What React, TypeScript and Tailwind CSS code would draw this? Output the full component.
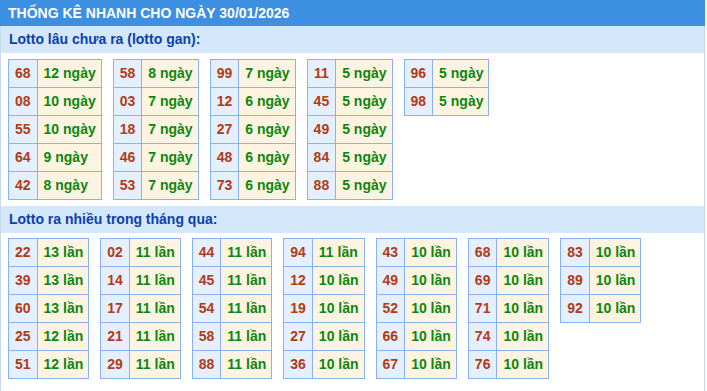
const gan: [string, string][][] = [
  [["68", "12 ngày"], ["08", "10 ngày"], ["55", "10 ngày"], ["64", "9 ngày"], ["42", "8 ngày"]],
  [["58", "8 ngày"], ["03", "7 ngày"], ["18", "7 ngày"], ["46", "7 ngày"], ["53", "7 ngày"]],
  [["99", "7 ngày"], ["12", "6 ngày"], ["27", "6 ngày"], ["48", "6 ngày"], ["73", "6 ngày"]],
  [["11", "5 ngày"], ["45", "5 ngày"], ["49", "5 ngày"], ["84", "5 ngày"], ["88", "5 ngày"]],
  [["96", "5 ngày"], ["98", "5 ngày"]],
];

const nhieu: [string, string][][] = [
  [["22", "13 lần"], ["39", "13 lần"], ["60", "13 lần"], ["25", "12 lần"], ["51", "12 lần"]],
  [["02", "11 lần"], ["14", "11 lần"], ["17", "11 lần"], ["21", "11 lần"], ["29", "11 lần"]],
  [["44", "11 lần"], ["45", "11 lần"], ["54", "11 lần"], ["58", "11 lần"], ["88", "11 lần"]],
  [["94", "11 lần"], ["12", "10 lần"], ["19", "10 lần"], ["27", "10 lần"], ["36", "10 lần"]],
  [["43", "10 lần"], ["49", "10 lần"], ["52", "10 lần"], ["66", "10 lần"], ["67", "10 lần"]],
  [["68", "10 lần"], ["69", "10 lần"], ["71", "10 lần"], ["74", "10 lần"], ["76", "10 lần"]],
  [["83", "10 lần"], ["89", "10 lần"], ["92", "10 lần"]],
];

const LottoTable = ({ rows }: { rows: [string, string][] }) => (
  <table className="border-collapse self-start">
    <tbody>
      {rows.map(([num, val], i) => (
        <tr key={i}>
          <td className="h-[28px] border border-[#8ab2f2] bg-[#e4f0fd] px-[6px] text-center text-[#b23b17]">
            {num}
          </td>
          <td className="h-[28px] border border-[#8ab2f2] bg-[#fff4e2] pl-[6px] pr-[5px] text-left text-[#0b870e]">
            {val}
          </td>
        </tr>
      ))}
    </tbody>
  </table>
);

const SubHeader = ({ title }: { title: string }) => (
  <div className="h-[27px] bg-[#d5e8fb] pl-[8px] flex items-center text-[14px] font-bold text-[#0c3fae]">
    {title}
  </div>
);

export default function App() {
  return (
    <div
      className="w-[705px] h-[391px] bg-white text-[14px] font-bold"
      style={{ fontFamily: '"Liberation Sans", Arial, sans-serif' }}
    >
      <div className="h-[26px] bg-[#3d8fe2] pl-[8px] flex items-center text-white text-[14px]">
        THỐNG KÊ NHANH CHO NGÀY 30/01/2026
      </div>
      <div className="h-[365px] border-x border-[#c9d9ef]">
        <SubHeader title="Lotto lâu chưa ra (lotto gan):" />
        <div className="flex gap-[11px] pl-[7px] pt-[6px] pb-[6px]">
          {gan.map((t, i) => (
            <LottoTable key={i} rows={t} />
          ))}
        </div>
        <SubHeader title="Lotto ra nhiều trong tháng qua:" />
        <div className="flex gap-[11px] pl-[7px] pt-[5px]">
          {nhieu.map((t, i) => (
            <LottoTable key={i} rows={t} />
          ))}
        </div>
      </div>
    </div>
  );
}
